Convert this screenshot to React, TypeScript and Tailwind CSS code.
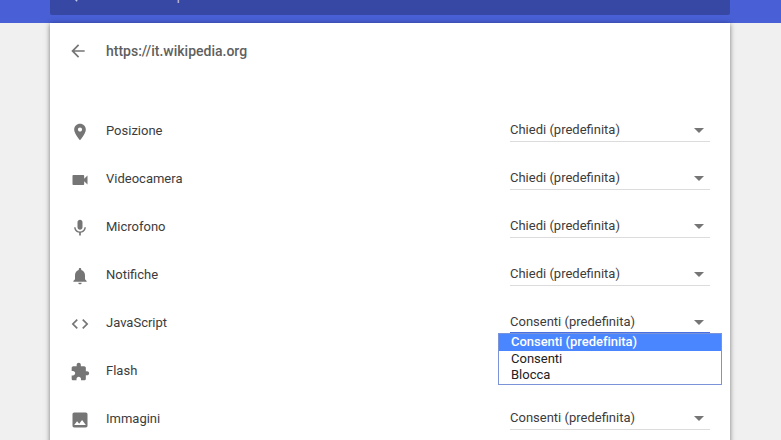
import type { ReactNode } from "react";

const icons: Record<string, ReactNode> = {
  location: (
    <path d="M12 2C8.13 2 5 5.13 5 9c0 5.25 7 13 7 13s7-7.75 7-13c0-3.87-3.13-7-7-7zm0 9.5c-1.38 0-2.5-1.12-2.5-2.5s1.12-2.5 2.5-2.5 2.5 1.12 2.5 2.5-1.12 2.5-2.5 2.5z" />
  ),
  camera: (
    <path d="M17 10.5V7c0-.55-.45-1-1-1H4c-.55 0-1 .45-1 1v10c0 .55.45 1 1 1h12c.55 0 1-.45 1-1v-3.5l4 4v-11l-4 4z" />
  ),
  mic: (
    <path d="M12 14c1.66 0 2.99-1.34 2.99-3L15 5c0-1.66-1.34-3-3-3S9 3.34 9 5v6c0 1.66 1.34 3 3 3zm5.3-3c0 3-2.54 5.1-5.3 5.1S6.7 14 6.7 11H5c0 3.41 2.72 6.23 6 6.72V21h2v-3.28c3.28-.48 6-3.3 6-6.72h-1.7z" />
  ),
  bell: (
    <path d="M12 22c1.1 0 2-.9 2-2h-4c0 1.1.89 2 2 2zm6-6v-5c0-3.07-1.64-5.64-4.5-6.32V4c0-.83-.67-1.5-1.5-1.5s-1.5.67-1.5 1.5v.68C7.63 5.36 6 7.92 6 11v5l-2 2v1h16v-1l-2-2z" />
  ),
  code: (
    <path d="M9.4 16.6L4.8 12l4.6-4.6L8 6l-6 6 6 6 1.4-1.4zm5.2 0l4.6-4.6-4.6-4.6L16 6l6 6-6 6-1.4-1.4z" />
  ),
  extension: (
    <path d="M20.5 11H19V7c0-1.1-.9-2-2-2h-4V3.5C13 2.12 11.88 1 10.5 1S8 2.12 8 3.5V5H4c-1.1 0-1.99.9-1.99 2v3.8H3.5c1.49 0 2.7 1.21 2.7 2.7s-1.21 2.7-2.7 2.7H2V20c0 1.1.9 2 2 2h3.8v-1.5c0-1.49 1.21-2.7 2.7-2.7 1.49 0 2.7 1.21 2.7 2.7V22H17c1.1 0 2-.9 2-2v-4h1.5c1.38 0 2.5-1.12 2.5-2.5S21.88 11 20.5 11z" />
  ),
  image: (
    <path d="M21 19V5c0-1.1-.9-2-2-2H5c-1.1 0-2 .9-2 2v14c0 1.1.9 2 2 2h14c1.1 0 2-.9 2-2zM8.5 13.5l2.5 3.01L14.5 12l4.5 6H5l3.5-4.5z" />
  ),
  back: <path d="M20 11H7.83l5.59-5.59L12 4l-8 8 8 8 1.41-1.41L7.83 13H20v-2z" />,
  search: (
    <path d="M15.5 14h-.79l-.28-.27C15.41 12.59 16 11.11 16 9.5 16 5.91 13.09 3 9.5 3S3 5.91 3 9.5 5.91 16 9.5 16c1.61 0 3.09-.59 4.23-1.57l.27.28v.79l5 4.99L20.49 19l-4.99-5zm-6 0C7.01 14 5 11.99 5 9.5S7.01 5 9.5 5 14 7.01 14 9.5 11.99 14 9.5 14z" />
  ),
};

const permissions = [
  { icon: "location", label: "Posizione", value: "Chiedi (predefinita)" },
  { icon: "camera", label: "Videocamera", value: "Chiedi (predefinita)" },
  { icon: "mic", label: "Microfono", value: "Chiedi (predefinita)" },
  { icon: "bell", label: "Notifiche", value: "Chiedi (predefinita)" },
  { icon: "code", label: "JavaScript", value: "Consenti (predefinita)", open: true },
  { icon: "extension", label: "Flash", value: "" },
  { icon: "image", label: "Immagini", value: "Consenti (predefinita)" },
];

const options = ["Consenti (predefinita)", "Consenti", "Blocca"];

function Icon({ name, className = "size-5 fill-[#757575]" }: { name: string; className?: string }) {
  return (
    <svg viewBox="0 0 24 24" className={`shrink-0 ${className}`}>
      {icons[name]}
    </svg>
  );
}

function OptionMenu() {
  return (
    <ul className="absolute top-[23px] -left-3 z-10 h-[52px] w-[224px] border border-[#7b93d8] bg-white text-[#222]">
      {options.map((option, i) => (
        <li
          key={option}
          className={
            i === 0
              ? "h-[17px] bg-[#4a86ff] pl-3 leading-[16px] font-medium tracking-[-0.03px] text-white"
              : "h-4 pl-3 leading-[16px]"
          }
        >
          {option}
        </li>
      ))}
    </ul>
  );
}

function Select({ value, open }: { value: string; open?: boolean }) {
  return (
    <div
      className={`relative mb-[2px] flex h-6 w-[200px] items-center justify-between border-b pr-[6.5px] ${
        open ? "border-[#4a6fe3] shadow-[inset_0_-1px_0_#4a6fe3]" : "border-[#dcdcdc]"
      }`}
    >
      <span className="leading-6">{value}</span>
      <svg viewBox="0 0 10 5" className="mt-[2px] h-[5px] w-[10px] fill-[#757575]">
        <path d="M0 0h10L5 5z" />
      </svg>
      {open && <OptionMenu />}
    </div>
  );
}

export default function App() {
  return (
    <div className="h-[440px] overflow-hidden bg-[#f0f0f0] font-['Roboto',sans-serif] text-[13px] text-[#3c3c3c]">
      {/* Toolbar */}
      <header className="h-[23px] bg-[#485fd5] pl-[50px]">
        <div className="h-[15px] w-[680px] overflow-hidden rounded-b-[2px] bg-[#3748a4]">
          <div className="-mt-[14px] flex h-5 items-center pl-[14px] text-[#c3c8e4]">
            <Icon name="search" className="size-4 fill-[#c3c8e4]" />
            <span className="ml-[15px]">Cerca nelle impostazioni</span>
          </div>
        </div>
      </header>

      <main className="ml-[50px] h-[440px] w-[680px] bg-white shadow-[0_1px_5px_rgba(0,0,0,0.5)]">
        <div className="flex h-14 items-center pl-[18px] text-[14px] font-medium text-[#5f5f5f]">
          <Icon name="back" />
          <h1 className="ml-[18px]">https://it.wikipedia.org</h1>
        </div>

        {/* Permissions */}
        <div className="pt-[28px]">
          {permissions.map((item) => (
            <div key={item.label} className="flex h-12 items-center pr-5 pl-5">
              <div className="pt-[2px]">
                <Icon name={item.icon} />
              </div>
              <span className="ml-4 flex-1">{item.label}</span>
              {item.value && <Select value={item.value} open={item.open} />}
            </div>
          ))}
        </div>
      </main>
    </div>
  );
}
